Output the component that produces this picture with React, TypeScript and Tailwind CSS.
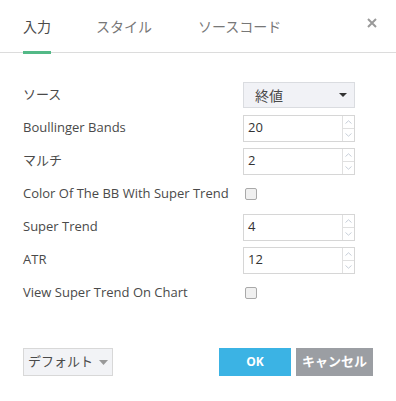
import React from 'react';

const font = { fontFamily: '"Open Sans", "Noto Sans CJK JP", sans-serif' };

const Spinner: React.FC<{ value: string }> = ({ value }) => (
  <div className="flex h-[27px] w-[112px] border border-[#d6d6d6] bg-white">
    <div className="flex flex-1 items-center pl-[4px] text-[13px] text-[#333]">{value}</div>
    <div className="flex w-[12px] flex-col border-l border-[#e0e0e0]">
      <div className="flex flex-1 items-center justify-center border-b border-[#e0e0e0]">
        <svg width="7" height="4" viewBox="0 0 7 4">
          <path d="M0.5 3.5 L3.5 0.8 L6.5 3.5" fill="none" stroke="#b9c3cf" strokeWidth="0.8" />
        </svg>
      </div>
      <div className="flex flex-1 items-center justify-center">
        <svg width="7" height="4" viewBox="0 0 7 4">
          <path d="M0.5 0.5 L3.5 3.2 L6.5 0.5" fill="none" stroke="#b9c3cf" strokeWidth="0.8" />
        </svg>
      </div>
    </div>
  </div>
);

const Checkbox: React.FC = () => (
  <div className="ml-[2px] h-[12px] w-[12px] rounded-[2px] border border-[#a9a9a9] bg-[#f0f0f0]" />
);

const Row: React.FC<{ label: string; children: React.ReactNode }> = ({ label, children }) => (
  <div className="flex h-[28px] items-center">
    <div className="w-[220px] text-[13px] text-[#4a4a4a]">{label}</div>
    {children}
  </div>
);

export default function App() {
  return (
    <div className="h-[401px] w-[396px] bg-white" style={font}>
      <div className="relative flex h-[53px] items-end border-b border-[#dcdcdc] pl-[23px]">
        <div className="-mb-[2px] flex h-[53px] items-center border-b-[3px] border-[#53b987] pt-[1px] text-[14px] text-[#4a4a4a]">
          入力
        </div>
        <div className="ml-[45px] flex h-[51px] items-center text-[14px] text-[#777]">スタイル</div>
        <div className="ml-[46px] flex h-[51px] items-center text-[14px] text-[#777]">ソースコード</div>
        <svg className="absolute right-[19px] top-[18px]" width="10" height="10" viewBox="0 0 10 10">
          <path d="M1 1 L9 9 M9 1 L1 9" stroke="#9a9a9a" strokeWidth="2" />
        </svg>
      </div>

      <div className="flex flex-col gap-[5px] px-[23px] pt-[28px]">
        <Row label="ソース">
          <div className="flex h-[26px] w-[112px] items-center justify-between border border-[#dadce0] bg-[#f1f2f6] pl-[11px] pr-[7px] text-[14px] text-[#4a4a4a]">
            <span>終値</span>
            <svg width="8" height="4" viewBox="0 0 8 4">
              <path d="M0 0 L8 0 L4 4 Z" fill="#333" />
            </svg>
          </div>
        </Row>
        <Row label="Boullinger Bands">
          <Spinner value="20" />
        </Row>
        <Row label="マルチ">
          <Spinner value="2" />
        </Row>
        <Row label="Color Of The BB With Super Trend">
          <Checkbox />
        </Row>
        <Row label="Super Trend">
          <Spinner value="4" />
        </Row>
        <Row label="ATR">
          <Spinner value="12" />
        </Row>
        <Row label="View Super Trend On Chart">
          <Checkbox />
        </Row>
      </div>

      <div className="mt-[41px] flex items-center px-[23px]">
        <div className="flex h-[28px] w-[90px] items-center justify-center gap-[6px] border border-[#d8d8d8] bg-[#f2f3f6] text-[13px] text-[#4a4a4a]">
          <span>デフォルト</span>
          <svg width="9" height="5" viewBox="0 0 9 5">
            <path d="M0 0 L9 0 L4.5 5 Z" fill="#999" />
          </svg>
        </div>
        <div className="ml-auto flex h-[28px] w-[72px] items-center justify-center bg-[#3bb3e4] text-[12px] font-bold text-white">
          OK
        </div>
        <div className="ml-[5px] flex h-[28px] w-[77px] items-center justify-center bg-[#9b9ea3] text-[13px] font-bold text-white">
          キャンセル
        </div>
      </div>
    </div>
  );
}
